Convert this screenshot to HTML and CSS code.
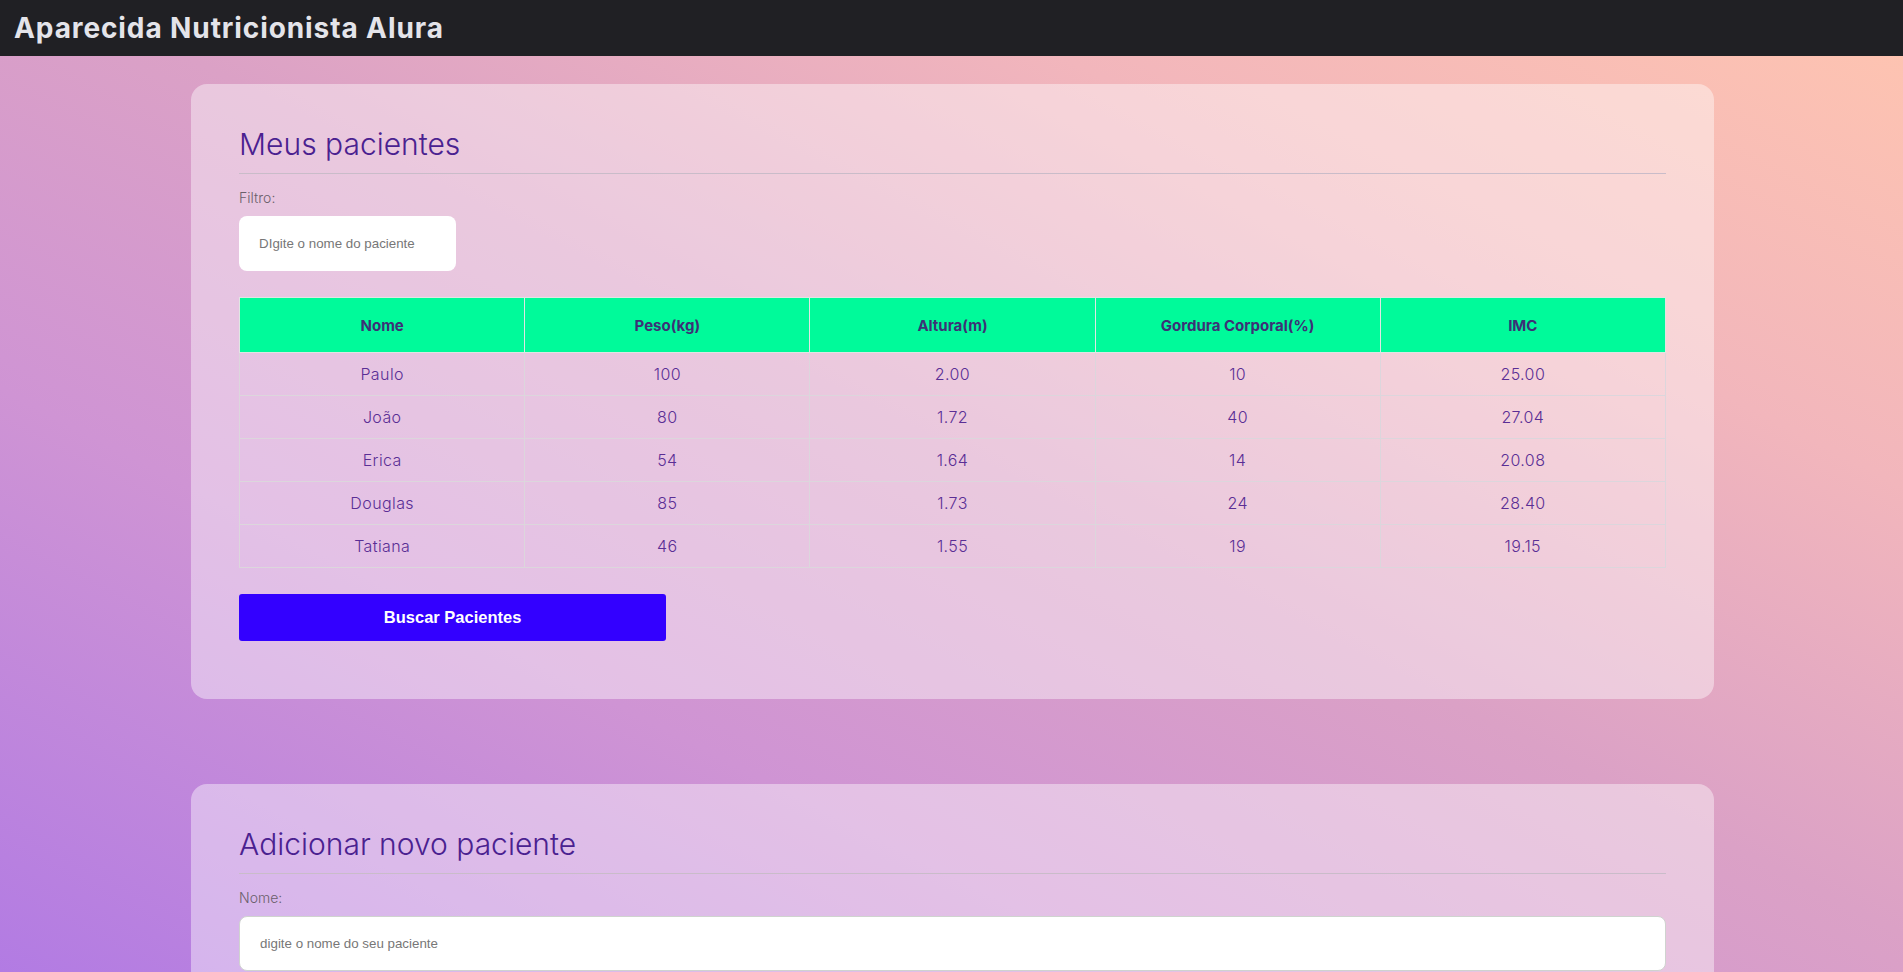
FILE: index.html
```html
<!DOCTYPE html>
<html lang="pt-br">
<head>
<meta charset="utf-8">
<title>Aparecida Nutricionista</title>
<link rel="stylesheet" href="styles.css">
</head>
<body>
<header class="topbar">
  <h1 class="brand">Aparecida Nutricionista Alura</h1>
</header>
<main class="page">
  <section class="card">
    <h2 class="card-title">Meus pacientes</h2>
    <label class="field-label" for="filtro">Filtro:</label>
    <input class="filter-input" id="filtro" type="text" placeholder="DIgite o nome do paciente">
    <table class="patients">
      <thead>
        <tr><th>Nome</th><th>Peso(kg)</th><th>Altura(m)</th><th>Gordura Corporal(%)</th><th>IMC</th></tr>
      </thead>
      <tbody>
        <tr><td>Paulo</td><td>100</td><td>2.00</td><td>10</td><td>25.00</td></tr>
        <tr><td>João</td><td>80</td><td>1.72</td><td>40</td><td>27.04</td></tr>
        <tr><td>Erica</td><td>54</td><td>1.64</td><td>14</td><td>20.08</td></tr>
        <tr><td>Douglas</td><td>85</td><td>1.73</td><td>24</td><td>28.40</td></tr>
        <tr><td>Tatiana</td><td>46</td><td>1.55</td><td>19</td><td>19.15</td></tr>
      </tbody>
    </table>
    <button class="btn-primary" type="button">Buscar Pacientes</button>
  </section>
  <section class="card">
    <h2 class="card-title">Adicionar novo paciente</h2>
    <form class="patient-form">
      <label class="field-label" for="nome">Nome:</label>
      <input class="text-input" id="nome" type="text" placeholder="digite o nome do seu paciente">
      <label class="field-label" for="peso">Peso:</label>
      <input class="text-input" id="peso" type="text" placeholder="digite o peso do seu paciente">
      <label class="field-label" for="altura">Altura:</label>
      <input class="text-input" id="altura" type="text" placeholder="digite a altura do seu paciente">
    </form>
  </section>
</main>
</body>
</html>
```
FILE: styles.css
```css
* { box-sizing: border-box; }

html, body { margin: 0; padding: 0; }

body {
  min-height: 100vh;
  background: linear-gradient(to top right, #b27be3 0%, #cf94d4 30%, #dba1c6 52%, #f2b6bc 75%, #ffc5b0 100%);
  background-attachment: fixed;
  font-family: "Inter", "Lato", sans-serif;
}

.topbar {
  height: 56px;
  background: #202024;
  display: flex;
  align-items: center;
  padding-left: 14px;
}

.brand {
  margin: 0;
  font-family: "Inter", sans-serif;
  font-weight: 700;
  font-size: 28px;
  letter-spacing: 0.9px;
  color: #e4e4ea;
  line-height: 1;
}

.page {
  display: flex;
  flex-direction: column;
  align-items: center;
  padding-top: 28px;
  padding-left: 2px;
  gap: 85px;
}

.card {
  width: calc(80% + 2px);
  background: rgba(255, 255, 255, 0.42);
  border-radius: 16px;
  padding: 42px 48px 58px;
  display: flex;
  flex-direction: column;
  align-items: flex-start;
}

.card-title {
  align-self: stretch;
  margin: 0;
  font-weight: 300;
  font-size: 30px;
  line-height: 36px;
  color: #4a2190;
  padding-bottom: 11px;
  border-bottom: 1px solid #c9bcc9;
}

.field-label {
  margin-top: 14px;
  font-size: 14px;
  font-weight: 300;
  line-height: 20px;
  color: #6a5f6a;
}

.filter-input,
.text-input {
  margin-top: 8px;
  height: 55px;
  padding: 0 20px;
  font-family: "Liberation Sans", Arial, sans-serif;
  font-size: 13.333px;
  color: #333;
  background: #fff;
  border-radius: 8px;
  outline: none;
}

.filter-input {
  width: 217px;
  border: none;
}

.text-input {
  align-self: stretch;
  border: 1px solid #cfd3cf;
}

.filter-input::placeholder,
.text-input::placeholder { color: #777; }

.patient-form {
  align-self: stretch;
  display: flex;
  flex-direction: column;
}

.patients {
  margin-top: 26px;
  width: 100%;
  border-collapse: collapse;
  table-layout: fixed;
}

.patients th,
.patients td {
  width: 20%;
  border: 1px solid #dcd6dc;
  text-align: center;
  padding: 0;
}

.patients th {
  height: 55px;
  background: #00fa9a;
  font-weight: 700;
  font-size: 15px;
  color: #3d3176;
  border-color: #dfe6e3;
}

.patients td {
  height: 43px;
  font-weight: 300;
  font-size: 16px;
  letter-spacing: 0.4px;
  color: #5a2e95;
}

.btn-primary {
  margin-top: 26px;
  width: 427px;
  height: 47px;
  border: none;
  border-radius: 3px;
  background: #3300ff;
  color: #fff;
  font-family: "Liberation Sans", Arial, sans-serif;
  font-weight: 700;
  font-size: 16.5px;
  cursor: pointer;
}
```
